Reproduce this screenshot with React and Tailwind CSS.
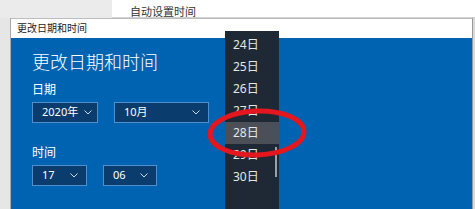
const cjk = { fontFamily: '"Noto Sans", "Noto Sans CJK SC", sans-serif' }

function Chevron() {
  return (
    <svg width="8" height="5" viewBox="0 0 8 5" className="shrink-0">
      <path d="M0.5 0.5l3.5 3.5 3.5-3.5" fill="none" stroke="#c9d8ea" strokeWidth="1" />
    </svg>
  )
}

function Select({ value, width }) {
  return (
    <div
      className="h-[21px] flex items-center justify-between gap-[6px] pl-[9px] pr-[8px] bg-[#0a3d6e] border border-[#4f8fd0] text-[11px] text-white whitespace-nowrap"
      style={{ width }}
    >
      <span>{value}</span>
      <Chevron />
    </div>
  )
}

const days = ['24日', '25日', '26日', '27日', '28日', '29日', '30日']

export default function App() {
  return (
    <div className="relative w-[475px] h-[209px] overflow-hidden bg-[#e9e9e9] flex flex-col" style={cjk}>
      {/* window behind */}
      <div className="h-[18px] flex shrink-0">
        <div className="w-[112px] bg-[#ebebeb]" />
        <div className="flex-1 bg-white pl-[18px] pt-[6px] text-[11px] leading-[12px] text-[#333] border-b border-[#d0d0d0]">
          自动设置时间
        </div>
      </div>

      <div className="flex flex-1">
        <div className="w-[11px] bg-[#e6e6e6] border-r border-[#a8a8a8]" />
        <div className="w-[461px] flex flex-col">
          <div className="h-[20px] bg-white border-t border-[#bdbdbd] pl-[6px] text-[10px] leading-[19px] text-[#222]">
            更改日期和时间
          </div>
          <div className="flex-1 bg-[#0063b1] pl-[21px] pt-[12px] text-white">
            <div className="text-[18px] leading-[24px] font-light">更改日期和时间</div>
            <div className="mt-[8px] text-[12px] leading-[16px]">日期</div>
            <div className="mt-[4px] flex gap-[16px]">
              <Select value="2020年" width={66} />
              <Select value="10月" width={95} />
            </div>
            <div className="mt-[22px] text-[12px] leading-[16px]">时间</div>
            <div className="mt-[4px] flex gap-[16px]">
              <Select value="17" width={55} />
              <Select value="06" width={54} />
            </div>
          </div>
        </div>
        <div className="w-[3px] bg-[#d9d9d9] border-l border-[#9a9a9a]" />
      </div>

      {/* open day list */}
      <div className="absolute left-[225px] top-[31px] w-[54px] bottom-0 bg-[#1f2935] pt-[3px]">
        {days.map(d => (
          <div
            key={d}
            className={`h-[22px] pl-[8px] text-[12px] leading-[22px] text-[#e6e6e6] ${d === '28日' ? 'bg-[#4b5058]' : ''}`}
          >
            {d}
          </div>
        ))}
        <div className="absolute right-[2px] top-[116px] w-[2px] h-[30px] bg-[#a0a0a0]" />
      </div>

      {/* red marker */}
      <svg className="absolute left-[205px] top-[106px] pointer-events-none" width="104" height="54" viewBox="0 0 104 54">
        <ellipse cx="52" cy="27" rx="47" ry="22" fill="none" stroke="#e4161e" strokeWidth="5" transform="rotate(-2 52 27)" />
      </svg>
    </div>
  )
}
